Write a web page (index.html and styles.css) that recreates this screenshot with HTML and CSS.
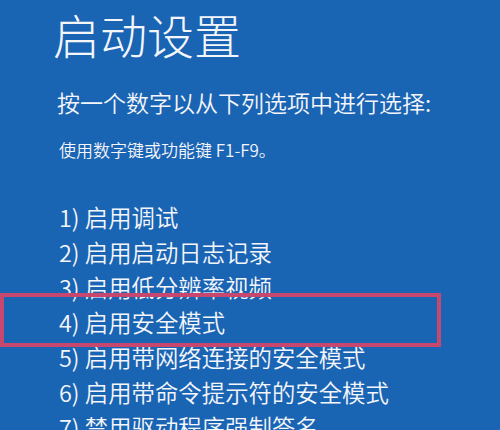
FILE: index.html
```html
<!DOCTYPE html>
<html lang="zh-CN">
<head>
<meta charset="utf-8">
<title>启动设置</title>
<link rel="stylesheet" href="styles.css">
</head>
<body>
<main class="screen">
  <h1 class="title">启动设置</h1>
  <p class="prompt">按一个数字以从下列选项中进行选择:</p>
  <p class="hint">使用数字键或功能键 F1-F9。</p>
  <ol class="options">
    <li>1) 启用调试</li>
    <li>2) 启用启动日志记录</li>
    <li>3) 启用低分辨率视频</li>
    <li>4) 启用安全模式</li>
    <li>5) 启用带网络连接的安全模式</li>
    <li>6) 启用带命令提示符的安全模式</li>
    <li>7) 禁用驱动程序强制签名</li>
  </ol>
  <div class="highlight"></div>
</main>
</body>
</html>
```

FILE: styles.css
```css
html, body {
  margin: 0;
  padding: 0;
  height: 100%;
  overflow: hidden;
}
body {
  background: #1a64b4;
  color: #f4f6fa;
  font-family: "Noto Sans CJK SC", "Noto Sans", sans-serif;
}
.screen {
  position: relative;
  width: 500px;
  height: 430px;
  overflow: hidden;
}
.title {
  margin: 6px 0 0 53px;
  font-size: 47px;
  font-weight: 300;
  line-height: 56px;
  letter-spacing: 0;
}
.prompt {
  margin: 23px 0 0 57px;
  font-size: 23px;
  font-weight: 350;
  line-height: 34px;
}
.hint {
  margin: 18px 0 0 59px;
  font-size: 17px;
  font-weight: 350;
  line-height: 26px;
}
.options {
  list-style: none;
  margin: 37px 0 0 59px;
  padding: 0;
  font-size: 23.4px;
  font-weight: 350;
  line-height: 35px;
}
.options li {
  white-space: nowrap;
}
.highlight {
  position: absolute;
  left: 0;
  top: 293px;
  width: 441px;
  height: 54px;
  box-sizing: border-box;
  border: 4px solid #c8476e;
}
```
